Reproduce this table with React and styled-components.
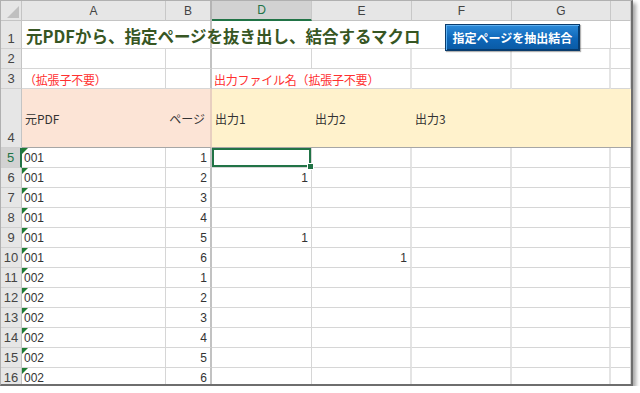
import React from 'react';
import styled, { createGlobalStyle, css } from 'styled-components';

const GlobalStyle = createGlobalStyle`
	html, body {
		margin: 0;
		padding: 0;
		background: #ffffff;
	}
	body {
		font-family: 'Liberation Sans', 'Noto Sans CJK JP', sans-serif;
	}
`;

const GREEN = '#217346';
const GRID = '#d6d6d6';

const data = [
	['001', 1, '', ''],
	['001', 2, 1, ''],
	['001', 3, '', ''],
	['001', 4, '', ''],
	['001', 5, 1, ''],
	['001', 6, '', 1],
	['002', 1, '', ''],
	['002', 2, '', ''],
	['002', 3, '', ''],
	['002', 4, '', ''],
	['002', 5, '', ''],
	['002', 6, '', ''],
];

const columns = ['A', 'B', 'D', 'E', 'F', 'G', ''];

const App = () => {
	return (
		<>
			<GlobalStyle />
			<Window>
				<Sheet>
					<Corner />
					{columns.map(c => (
						<ColHead key={c || 'H'} selected={c === 'D'} hidden={c === 'B'}>
							{c}
						</ColHead>
					))}

					<RowHead>1</RowHead>
					<TitleCell>
						<Title>元PDFから、指定ページを抜き出し、結合するマクロ</Title>
						<MacroButton>指定ページを抽出結合</MacroButton>
					</TitleCell>
					<Cell />

					<RowHead>2</RowHead>
					<Cell />
					<Cell hidden />
					<Cell />
					<Cell wide />
					<Cell wide />
					<Cell wide />
					<Cell />

					<RowHead>3</RowHead>
					<Cell>
						<Note>（拡張子不要）</Note>
					</Cell>
					<Cell hidden />
					<Cell span={2} wide>
						<Note>出力ファイル名（拡張子不要）</Note>
					</Cell>
					<Cell wide />
					<Cell wide />
					<Cell />

					<RowHead>4</RowHead>
					<Label tone="peach">元PDF</Label>
					<Label tone="peach" align="right" hidden>
						ページ
					</Label>
					<Label tone="cream">出力1</Label>
					<Label tone="cream">出力2</Label>
					<Label tone="cream">出力3</Label>
					<Label tone="cream" />
					<Label tone="cream" />

					{data.map(([pdf, page, d, e], i) => (
						<React.Fragment key={i}>
							<RowHead selected={i === 0}>{i + 5}</RowHead>
							<Cell flag>{pdf}</Cell>
							<Cell hidden align="right">
								{page}
							</Cell>
							<Cell align="right" selected={i === 0}>
								{d}
							</Cell>
							<Cell align="right" wide>
								{e}
							</Cell>
							<Cell wide />
							<Cell wide />
							<Cell />
						</React.Fragment>
					))}
				</Sheet>
			</Window>
		</>
	);
};

const Window = styled.div`
	width: 630px;
	height: 383px;
	overflow: hidden;
	border-top: 1px solid #b0b0b0;
	border-left: 1px solid #b0b0b0;
	border-right: 2px solid #6e6e6e;
	border-bottom: 2px solid #6e6e6e;
	box-shadow: 3px 3px 4px rgba(0, 0, 0, 0.35);
	background: #ffffff;
`;

const Sheet = styled.div`
	display: grid;
	grid-template-columns: 21px 144px 46px 100px 100px 100px 99px 1fr;
	grid-template-rows: 20px 28px 20px 20px 59px repeat(12, 20px);
	font-size: 12px;
	color: #333;
`;

const Corner = styled.div`
	position: relative;
	background: #e6e6e6;
	border-right: 1px solid #c4c4c4;
	border-bottom: 1px solid #c4c4c4;
	&::after {
		content: '';
		position: absolute;
		right: 2px;
		bottom: 2px;
		border-left: 12px solid transparent;
		border-bottom: 12px solid #c0c0c0;
	}
`;

const ColHead = styled.div`
	display: flex;
	align-items: center;
	justify-content: center;
	box-sizing: border-box;
	background: ${p => (p.selected ? '#d2d2d2' : '#e6e6e6')};
	color: ${p => (p.selected ? GREEN : '#444')};
	font-size: 12px;
	border-right: ${p => (p.hidden ? '2px double #b4b4b4' : '1px solid #c8c8c8')};
	border-bottom: ${p => (p.selected ? `2px solid ${GREEN}` : '1px solid #c4c4c4')};
`;

const RowHead = styled.div`
	display: flex;
	align-items: flex-end;
	justify-content: center;
	box-sizing: border-box;
	padding-bottom: 2px;
	background: ${p => (p.selected ? '#d2d2d2' : '#e6e6e6')};
	color: ${p => (p.selected ? GREEN : '#444')};
	font-size: 13px;
	line-height: 14px;
	border-right: ${p => (p.selected ? `2px solid ${GREEN}` : '1px solid #c4c4c4')};
	border-bottom: 1px solid #d0d0d0;
`;

const cellBorders = css`
	border-right: ${p =>
		p.hidden ? '2px solid #c2c2c2' : p.wide ? '2px solid #e4e4e4' : `1px solid ${GRID}`};
	border-bottom: 1px solid ${GRID};
`;

const Cell = styled.div`
	position: relative;
	display: flex;
	align-items: center;
	justify-content: ${p => (p.align === 'right' ? 'flex-end' : 'flex-start')};
	box-sizing: border-box;
	padding: 1px 3px 0 2px;
	grid-column: ${p => (p.span ? `span ${p.span}` : 'auto')};
	white-space: nowrap;
	${cellBorders}
	${p =>
		p.flag &&
		css`
			&::before {
				content: '';
				position: absolute;
				left: 0;
				top: 0;
				border-top: 6px solid #1e7b34;
				border-right: 6px solid transparent;
			}
		`}
	${p =>
		p.selected &&
		css`
			box-shadow: inset 0 0 0 2px ${GREEN};
			&::after {
				content: '';
				position: absolute;
				right: -3px;
				bottom: -3px;
				width: 5px;
				height: 5px;
				background: ${GREEN};
				border: 1px solid #fff;
				z-index: 2;
			}
		`}
`;

const TitleCell = styled.div`
	grid-column: span 6;
	display: flex;
	align-items: center;
	justify-content: space-between;
	box-sizing: border-box;
	padding: 0 30px 0 4px;
	border-right: 1px solid ${GRID};
	border-bottom: 1px solid ${GRID};
	background: linear-gradient(
		to right,
		transparent 188px,
		#c2c2c2 188px,
		#c2c2c2 190px,
		transparent 190px
	);
`;

const Title = styled.span`
	font-family: 'Noto Sans CJK JP', sans-serif;
	font-weight: 700;
	font-size: 16.5px;
	line-height: 20px;
	color: #375623;
	white-space: nowrap;
	padding-top: 2px;
`;

const MacroButton = styled.button`
	align-self: flex-start;
	margin-top: 3px;
	width: 135px;
	height: 27px;
	padding: 0;
	position: relative;
	z-index: 3;
	font-family: 'Noto Sans CJK JP', sans-serif;
	font-weight: 700;
	font-size: 12px;
	color: #ffffff;
	background: linear-gradient(#2c8ad8, #0d66b8 55%, #0a5aa4);
	border: 1px solid #0b3c6c;
	box-shadow: inset 1px 1px 0 #5fb0f0, inset -1px -1px 0 #063c70, 1px 1px 1px rgba(0, 0, 0, 0.3);
	cursor: pointer;
`;

const Note = styled.span`
	font-family: 'Noto Sans CJK JP', sans-serif;
	font-size: 12px;
	letter-spacing: -0.2px;
	color: #ff3030;
`;

const Label = styled.div`
	display: flex;
	align-items: center;
	justify-content: ${p => (p.align === 'right' ? 'flex-end' : 'flex-start')};
	box-sizing: border-box;
	padding: 0 5px 0 3px;
	font-family: 'Noto Sans CJK JP', sans-serif;
	font-size: 12px;
	color: #333;
	background: ${p => (p.tone === 'peach' ? '#fce4d6' : '#fff2cc')};
	border-right: ${p => (p.hidden ? '2px solid #e8cfc0' : 'none')};
	border-bottom: 1px solid #a6a6a6;
`;

export default App;
